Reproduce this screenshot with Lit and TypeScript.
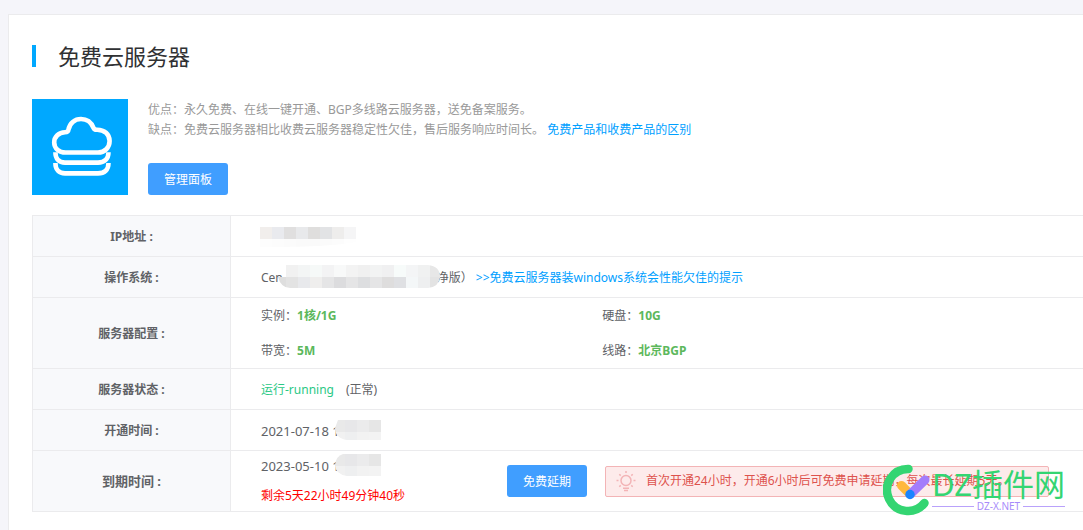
import { LitElement, html, css, svg } from "lit";
import { customElement } from "lit/decorators.js";

type Tile = [number, number, number, number, string];

// Rows of equal tiles that hide private values.
const tiles = (y: number, size: number, height: number, start: number, colors: string[]): Tile[] =>
  colors.map((c, i) => [start + i * size, y, size, height, c] as Tile);

const drawTiles = (list: Tile[]) =>
  list.map(([x, y, w, h, c]) => svg`<rect x=${x} y=${y} width=${w} height=${h} fill=${c}></rect>`);

const ipTiles: Tile[] = [
  ...tiles(0, 12, 12, 0, ["#f1eeec", "#e9eaee", "#e0dfdf", "#e8e9eb", "#dfdedd", "#e2e3e5", "#eeedec", "#f5f5f6"]),
  ...tiles(12, 12, 10, 0, ["#fdfdfd", "#fcfcfc", "#fbfbfb", "#fafafa", "#fafafa", "#fbfbfb", "#fcfcfc", "#fefefe"]),
];

const osTiles: Tile[] = [
  ...tiles(0, 12, 12, -4, ["#ffffff", "#f1f1f1", "#f3f5f5", "#f6f9f8", "#f3f3f4", "#f8f9f9", "#f3f3f3", "#f0f0f0", "#f2f3f3", "#f0f0f1", "#f7fbfa", "#f4f5f6", "#f0f1f1", "#e7e7e7"]),
  ...tiles(12, 12, 12, -4, ["#dedede", "#e3e3e3", "#e8e9ec", "#efeeed", "#e5e5e6", "#dcdcde", "#e5e5e6", "#dddee0", "#e5e5e6", "#dedddd", "#dfe0e3", "#f4f7f8", "#eeeff0", "#e3e3e3"]),
];

const timeTiles: Tile[] = [
  ...tiles(0, 12, 12, -2, ["#e9e9e9", "#e7e7e9", "#ebebec", "#e6e6e6"]),
  ...tiles(12, 12, 10, -2, ["#f1f1f1", "#eeeff0", "#f2f2f2", "#f3f3f3"]),
];

@customElement("app-root")
export class AppRoot extends LitElement {
  static styles = css`
    :host {
      display: flex;
      flex-direction: column;
      position: relative;
      box-sizing: border-box;
      min-height: 100vh;
      padding: 14px 0 0 8px;
      overflow: hidden;
      background: #f5f5fa;
      color: #606266;
      font-family: "Noto Sans", "Noto Sans CJK SC", sans-serif;
      font-size: 12px;
      line-height: 20px;
    }
    .card {
      flex: 1;
      padding: 24px 0 18px 23px;
      background: #fff;
      border: 1px solid #ebebed;
      border-width: 1px 0 0 1px;
    }
    .title {
      display: flex;
      align-items: center;
      gap: 22px;
      margin: 0;
      color: #303133;
      font-size: 22px;
      font-weight: 400;
      line-height: 34px;
    }
    .title::before {
      content: "";
      width: 4px;
      height: 22px;
      background: #00a8ff;
    }
    .product {
      display: flex;
      gap: 20px;
      margin: 26px 0 20px;
    }
    .logo {
      flex: none;
      display: block;
      width: 96px;
      height: 96px;
      background: #00a8ff;
    }
    .intro {
      display: flex;
      flex-direction: column;
      justify-content: space-between;
      align-items: flex-start;
      padding-top: 1px;
      color: #999;
    }
    .intro p {
      margin: 0;
    }
    a {
      color: #00a0ff;
      text-decoration: none;
    }
    .btn {
      flex: none;
      width: 80px;
      height: 32px;
      padding: 2px 0 0;
      border: 0;
      border-radius: 3px;
      background: #409eff;
      color: #fff;
      font: inherit;
      cursor: pointer;
    }
    .details {
      width: 100%;
      border-collapse: collapse;
    }
    .details th,
    .details td {
      height: 41px;
      padding: 2px 0 0;
      border: 1px solid #ebebed;
      border-right: 0;
      text-align: left;
      box-sizing: border-box;
    }
    .details th {
      width: 198px;
      background: #f8f9fb;
      font-weight: 700;
      text-align: center;
    }
    .details td {
      padding-left: 30px;
    }
    .details .last > * {
      padding-top: 0;
    }
    .details .emphasis {
      font-size: 13px;
    }
    .line {
      display: flex;
      align-items: center;
      height: 20px;
    }
    .mask {
      flex: none;
      position: relative;
      display: block;
      margin: 0 -3px 3px -5px;
    }
    .mask.whole {
      margin: 0 0 0 -1px;
    }
    .hint {
      margin-left: 3px;
    }
    .specs {
      display: grid;
      grid-template-columns: 5fr 7fr;
      row-gap: 15px;
      margin: 0;
      padding: 6px 3px 7px 0;
    }
    .specs div {
      display: flex;
    }
    .specs dt,
    .specs dd {
      margin: 0;
    }
    .specs dd {
      color: #5cb85c;
      font-weight: 700;
    }
    .running {
      margin-right: 12px;
      color: #2ac885;
    }
    .date {
      font-size: 13px;
    }
    .expiry {
      display: flex;
      align-items: center;
      height: 60px;
    }
    .remaining {
      flex: none;
      width: 246px;
    }
    .countdown {
      margin: 10px 0 0;
      color: #f00;
    }
    .alert {
      display: flex;
      flex: 1;
      align-items: center;
      gap: 10px;
      box-sizing: border-box;
      height: 31px;
      margin: 0 34px 0 18px;
      padding-left: 10px;
      border: 1px solid #f3b4b6;
      border-radius: 2px;
      background: #fdebeb;
      color: #dd524d;
      white-space: nowrap;
    }
    .watermark {
      position: absolute;
      right: 18px;
      bottom: 14px;
      display: flex;
      align-items: center;
      gap: 2px;
      pointer-events: none;
    }
    .brand {
      color: #34d572;
      font-size: 31px;
      line-height: 32px;
    }
    .domain {
      display: flex;
      align-items: center;
      gap: 3px;
      color: #a78bfa;
      font-size: 10px;
      line-height: 12px;
    }
    .domain::before,
    .domain::after {
      content: "";
      flex: 1;
      height: 1px;
      background: #b9a2fb;
    }
  `;

  private mask(width: number, height: number, list: Tile[], id: string, shape: string, whole = false) {
    return html`<svg class=${whole ? "mask whole" : "mask"} width=${width} height=${height} aria-hidden="true">
      <clipPath id=${id}><path d=${shape}></path></clipPath>
      <g clip-path=${`url(#${id})`} shape-rendering="crispEdges">${drawTiles(list)}</g>
    </svg>`;
  }

  render() {
    return html`
      <main class="card">
        <h1 class="title">免费云服务器</h1>
        <section class="product">
          <svg class="logo" viewBox="0 0 96 96" fill="none" stroke="#fff" stroke-width="4.6" aria-hidden="true">
            <path d="M33.5 53.5C27 53.5 22.2 49.3 22.2 43.5C22.2 37.6 26.8 33.4 33 33.2Q36.2 33.2 36.5 30.5C37.6 24.3 42.6 20 49 20C55.2 20 59.4 23.6 61.5 28.8Q62.3 30.8 65 30.7C72.3 30.6 77.6 35.3 77.6 42C77.6 48.7 72.6 53.5 66 53.5Z"></path>
            <path d="M23.4 53.2C23.4 59.8 27 63.6 33 63.6H66C72.5 63.6 76.5 59.8 76.5 53.2"></path>
            <path d="M23.4 64C23.4 70.8 27 74.4 33 74.4H66C72.5 74.4 76.5 70.8 76.5 64"></path>
          </svg>
          <div class="intro">
            <div>
              <p>优点：永久免费、在线一键开通、BGP多线路云服务器，送免备案服务。</p>
              <p>缺点：免费云服务器相比收费云服务器稳定性欠佳，售后服务响应时间长。 <a href="#compare">免费产品和收费产品的区别</a></p>
            </div>
            <button class="btn" type="button">管理面板</button>
          </div>
        </section>

        <table class="details">
          <tbody>
            <tr>
              <th scope="row">IP地址 :</th>
              <td>${this.mask(96, 20, ipTiles, "ip", "M0 0H96V15C75 19 45 20 0 20Z", true)}</td>
            </tr>
            <tr>
              <th scope="row">操作系统 :</th>
              <td>
                <div class="line">
                  <span>Cen</span>
                  ${this.mask(162, 23, osTiles, "os", "M8 0H150Q162 1 162 12Q161 22 150 23H12Q3 23 0 12H8Z")}
                  <span>净版）</span>
                  <a class="hint" href="#windows">&gt;&gt;免费云服务器装windows系统会性能欠佳的提示</a>
                </div>
              </td>
            </tr>
            <tr>
              <th scope="row">服务器配置 :</th>
              <td>
                <dl class="specs">
                  <div><dt>实例：</dt><dd>1核/1G</dd></div>
                  <div><dt>硬盘：</dt><dd>10G</dd></div>
                  <div><dt>带宽：</dt><dd>5M</dd></div>
                  <div><dt>线路：</dt><dd>北京BGP</dd></div>
                </dl>
              </td>
            </tr>
            <tr>
              <th scope="row">服务器状态 :</th>
              <td><span class="running">运行-running</span>(正常)</td>
            </tr>
            <tr>
              <th scope="row">开通时间 :</th>
              <td>
                <div class="line date">
                  <span>2021-07-18 1</span>
                  ${this.mask(46, 20, timeTiles, "opened", "M3 0H46V20H12Q0 18 0 8Z")}
                </div>
              </td>
            </tr>
            <tr class="last">
              <th class="emphasis" scope="row">到期时间 :</th>
              <td>
                <div class="expiry">
                  <div class="remaining">
                    <div class="line date">
                      <span>2023-05-10 1</span>
                      ${this.mask(46, 22, timeTiles, "expires", "M8 0H46V22H12Q0 20 0 11Q1 2 8 0Z")}
                    </div>
                    <p class="countdown">剩余5天22小时49分钟40秒</p>
                  </div>
                  <button class="btn" type="button">免费延期</button>
                  <div class="alert" role="note">
                    <svg width="20" height="22" viewBox="0 0 20 22" fill="none" stroke="#f3b4b6" stroke-width="1.5" aria-hidden="true">
                      <circle cx="10" cy="10.5" r="5"></circle>
                      <path d="M10 1v2M3.3 4.2l1.4 1.4M16.7 4.2l-1.4 1.4M.5 10.5h2M17.5 10.5h2M3.3 16.8l1.4-1.4M16.7 16.8l-1.4-1.4M7 18.3h6M8 20.6h4"></path>
                    </svg>
                    <span>首次开通24小时，开通6小时后可免费申请延期，每次最长延期5天。</span>
                  </div>
                </div>
              </td>
            </tr>
          </tbody>
        </table>
      </main>

      <div class="watermark">
        <svg width="47" height="52" viewBox="0 0 47 52" fill="none" stroke-linecap="round" aria-hidden="true">
          <path d="M25.5 5A21 21 0 1 0 41.5 39" stroke="#34d572" stroke-width="8.5"></path>
          <path d="M18.5 21.5L27 30" stroke="#ffb83d" stroke-width="9"></path>
          <path d="M27.5 30L42 16" stroke="#a37cfb" stroke-width="9"></path>
          <circle cx="27" cy="30.5" r="4.7" fill="#1a84ff"></circle>
        </svg>
        <div>
          <div class="brand">DZ插件网</div>
          <div class="domain">DZ-X.NET</div>
        </div>
      </div>
    `;
  }
}
